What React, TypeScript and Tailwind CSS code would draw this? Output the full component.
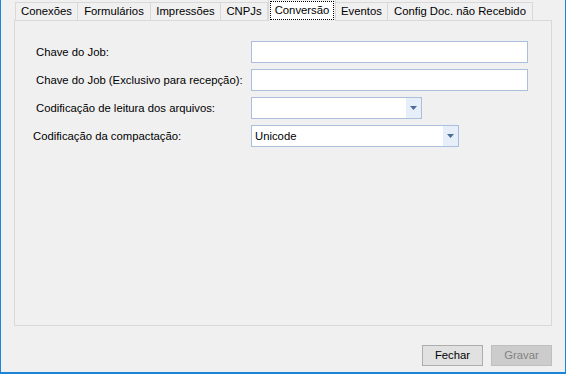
import React from 'react';

const tabs = ['Conexões', 'Formulários', 'Impressões', 'CNPJs', 'Conversão', 'Eventos', 'Config Doc. não Recebido'];
const tabWidths = [63, 73, 70, 47, 68, 52, 145];
const ACTIVE = 4;

function Field({ label, labelPad, width, combo, value }: { label: string; labelPad: string; width: string; combo?: boolean; value?: string }) {
  return (
    <div className="flex items-center">
      <div className={`${labelPad} w-[236px] shrink-0 whitespace-nowrap pt-[1px]`}>{label}</div>
      <div className={`${width} h-[22px] bg-white border border-[#abbedb] flex items-stretch`}>
        <div className="flex-1 flex items-center pl-[3px]">{value}</div>
        {combo && (
          <div className="w-[15px] bg-[#e6eef9] flex items-center justify-center">
            <svg width="7" height="4" viewBox="0 0 7 4">
              <path d="M0 0h7L3.5 4z" fill="#4d6d99" />
            </svg>
          </div>
        )}
      </div>
    </div>
  );
}

export default function App() {
  return (
    <div
      className="w-[566px] h-[374px] bg-[#f0f0f0] border-l border-r border-b-2 border-[#1c84d6] text-[11.3px] text-black overflow-hidden"
      style={{ fontFamily: '"Liberation Sans", Arial, sans-serif' }}
    >
      {/* Tab strip */}
      <div className="flex h-[20px] pl-[14px] items-end relative z-10">
        {tabs.map((t, i) =>
          i === ACTIVE ? (
            <div
              key={t}
              style={{ width: tabWidths[i] }}
              className="h-[21px] -mb-[1px] bg-[#f0f0f0] border-l border-r border-[#d9d9d9] flex items-stretch p-[1px]"
            >
              <div className="flex-1 border border-dotted border-black flex items-center justify-center bg-white">{t}</div>
            </div>
          ) : (
            <div
              key={t}
              style={{ width: tabWidths[i] }}
              className={`h-[18px] bg-[#f0f0f0] border-t border-r border-[#d9d9d9] flex items-center justify-center ${i === 0 ? 'border-l' : ''}`}
            >
              {t}
            </div>
          )
        )}
      </div>

      {/* Tab page */}
      <div className="ml-[13px] w-[538px] h-[306px] border border-[#d9d9d9] bg-[#f0f0f0] pt-[20px] flex flex-col">
        <Field label="Chave do Job:" labelPad="pl-[21px]" width="w-[277px]" />
        <div className="h-[6px]" />
        <Field label="Chave do Job (Exclusivo para recepção):" labelPad="pl-[21px]" width="w-[277px]" />
        <div className="h-[6px]" />
        <Field label="Codificação de leitura dos arquivos:" labelPad="pl-[21px]" width="w-[171px]" combo />
        <div className="h-[6px]" />
        <Field label="Codificação da compactação:" labelPad="pl-[18px]" width="w-[208px]" combo value="Unicode" />
      </div>

      {/* Buttons */}
      <div className="flex justify-end gap-[8px] pr-[13px] mt-[19px]">
        <button className="w-[61px] h-[21px] bg-[#e1e1e1] border border-[#adadad] text-black">Fechar</button>
        <button className="w-[61px] h-[21px] bg-[#cccccc] border border-[#bfbfbf] text-[#838383]" disabled>
          Gravar
        </button>
      </div>
    </div>
  );
}
